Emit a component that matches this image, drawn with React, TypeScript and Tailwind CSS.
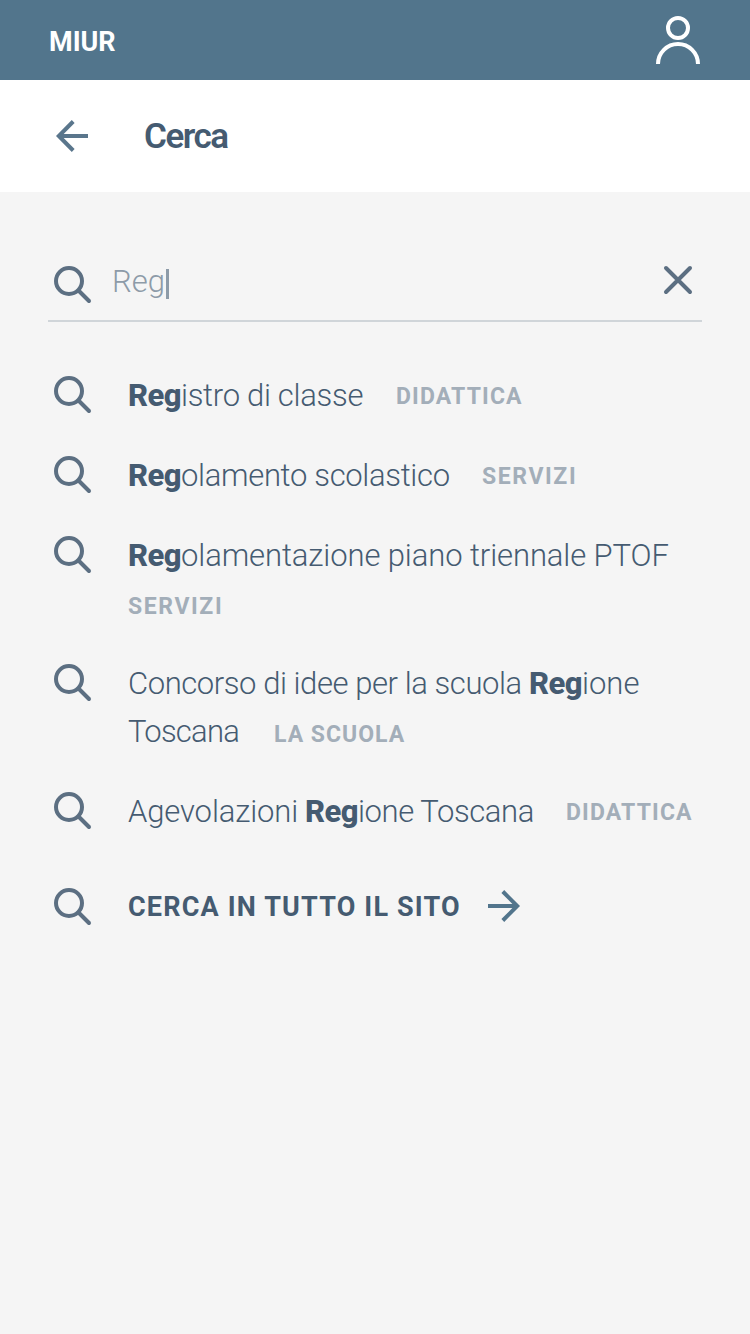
import type { ReactNode } from "react";

function SearchIcon() {
  return (
    <svg className="size-12 shrink-0" viewBox="0 0 48 48" fill="none" stroke="#5c6f82" strokeWidth="4" strokeLinecap="round">
      <circle cx="21" cy="21" r="13" />
      <path d="M31 31L41 41" />
    </svg>
  );
}

function Line({ children }: { children: ReactNode }) {
  return <div className="flex h-12 items-baseline whitespace-nowrap pt-0.5 leading-[48px]">{children}</div>;
}

function Match() {
  return <b className="w-[53px] shrink-0 text-[31px] font-extrabold tracking-[-0.6px]">Reg</b>;
}

function Text({ className, children }: { className: string; children: ReactNode }) {
  return <span className={`shrink-0 whitespace-pre text-[31px] font-[340] ${className}`}>{children}</span>;
}

function Tag({ className = "", children }: { className?: string; children: ReactNode }) {
  return <span className={`text-[23px] font-bold text-[#a3aeb9] ${className}`}>{children}</span>;
}

function Result({ children }: { children: ReactNode }) {
  return (
    <li className="flex gap-8">
      <SearchIcon />
      <div>{children}</div>
    </li>
  );
}

export default function App() {
  return (
    <div className="flex h-[1334px] w-[750px] flex-col overflow-hidden bg-[#f5f5f5] font-['Roboto','Open_Sans',sans-serif] text-[#455b71]">
      <header className="flex h-20 items-center justify-between bg-[#52758c] px-12">
        <span className="pl-px pt-1 text-[27px] font-bold text-white">MIUR</span>
        <svg className="h-20 w-12" viewBox="0 0 48 80" fill="none" stroke="#fff" strokeWidth="4">
          <circle cx="24" cy="28" r="10" />
          <path d="M4 64a20 20 0 0 1 40 0" />
        </svg>
      </header>

      <div className="flex h-28 items-center gap-12 bg-white px-12">
        <svg className="size-12" viewBox="0 0 48 48" fill="none" stroke="#5a768c" strokeWidth="4">
          <path d="M40 24H11M25.2 9.5L10.8 24l14.4 14.5" />
        </svg>
        <h1 className="pt-0.5 text-[35px] font-semibold leading-[48px] tracking-[-1.5px]">Cerca</h1>
      </div>

      <main className="px-12 pt-[68px]">
        <div className="flex h-[62px] w-[654px] border-b-2 border-[#d0d5d9]">
          <SearchIcon />
          <div className="ml-4 flex h-12 flex-1 items-start text-[31px] font-light leading-[43px] text-[#8d9ba8]">
            <span className="w-[54px]">Reg</span>
            <span className="mt-[9px] h-[30px] w-[3px] bg-[#8d9ba8]" />
          </div>
          <svg className="-mt-1 size-12" viewBox="0 0 48 48" fill="none" stroke="#5c6f82" strokeWidth="4" strokeLinecap="round">
            <path d="M12 12l24 24M36 12L12 36" />
          </svg>
        </div>

        <ul className="mt-12 flex flex-col gap-8">
          <Result>
            <Line>
              <Match />
              <Text className="w-[215px] tracking-[-0.29px]">istro di classe</Text>
              <Tag className="relative -top-0.5 tracking-[1.15px]">DIDATTICA</Tag>
            </Line>
          </Result>
          <Result>
            <Line>
              <Match />
              <Text className="w-[301px] tracking-[-0.32px]">olamento scolastico</Text>
              <Tag className="relative -top-0.5 tracking-[1.6px]">SERVIZI</Tag>
            </Line>
          </Result>
          <Result>
            <Line>
              <Match />
              <Text className="tracking-[-0.1px]">olamentazione piano triennale PTOF</Text>
            </Line>
            <Line>
              <Tag className="relative top-[3px] tracking-[1.6px]">SERVIZI</Tag>
            </Line>
          </Result>
          <Result>
            <Line>
              <Text className="w-[401px] tracking-[-0.43px]">Concorso di idee per la scuola</Text>
              <Match />
              <Text className="">ione</Text>
            </Line>
            <Line>
              <Text className="w-[146px] tracking-[-0.75px]">Toscana</Text>
              <Tag className="tracking-[1px]">LA SCUOLA</Tag>
            </Line>
          </Result>
          <Result>
            <Line>
              <Text className="w-[177px] tracking-[-0.12px]">Agevolazioni</Text>
              <Match />
              <Text className="w-[208px] tracking-[-0.4px]">ione Toscana</Text>
              <Tag className="relative -top-0.5 tracking-[1.15px]">DIDATTICA</Tag>
            </Line>
          </Result>
        </ul>

        <div className="mt-12 flex">
          <SearchIcon />
          <span className="ml-8 w-[352px] whitespace-nowrap text-[27px] font-bold leading-[50px] tracking-[1.17px]">
            CERCA IN TUTTO IL SITO
          </span>
          <svg className="size-12" viewBox="0 0 48 48" fill="none" stroke="#52758c" strokeWidth="4">
            <path d="M8 24h29M22.8 9.5L37.2 24 22.8 38.5" />
          </svg>
        </div>
      </main>
    </div>
  );
}
